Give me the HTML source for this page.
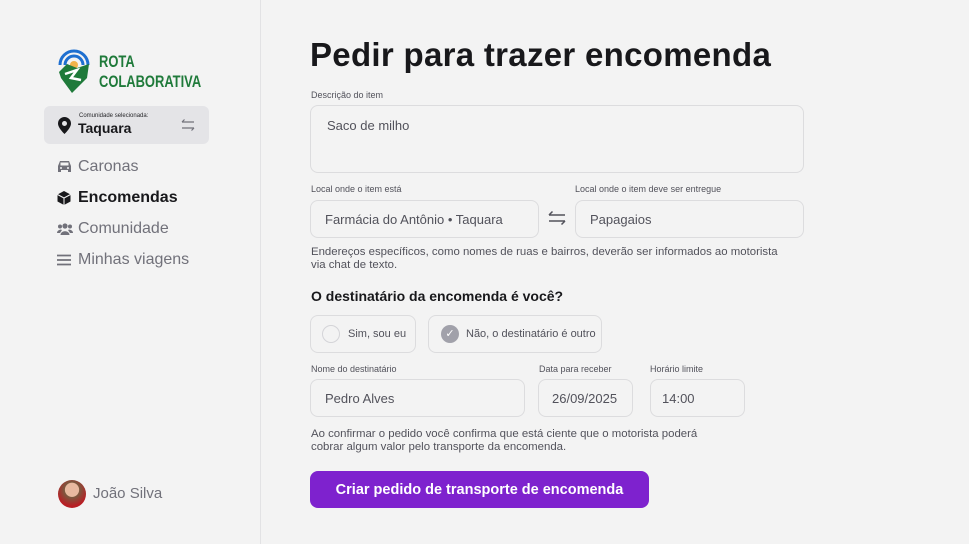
<!DOCTYPE html>
<html><head><meta charset="utf-8"><style>
*{box-sizing:border-box;margin:0;padding:0}
body{width:969px;height:544px;background:#f3f3f3;font-family:"Liberation Sans",sans-serif;position:relative;overflow:hidden;color:#18181b}
.side{position:absolute;left:0;top:0;width:261px;height:544px;border-right:1px solid #e2e2e4}
.a{position:absolute}
.lbl{position:absolute;font-size:9px;color:#52525b}
.inp{position:absolute;border:1px solid #dcdcde;border-radius:8px;font-size:13px;color:#52525b;padding-left:14px;display:flex;align-items:center}
.nav{position:absolute;left:58px;font-size:16px;color:#71717a}
.ic{position:absolute;left:57px}
.help{position:absolute;font-size:11.4px;color:#52525b;line-height:13px}
</style></head><body>
<div class="side">
<svg class="a" style="left:57px;top:48px" width="34" height="46" viewBox="0 0 34 46">
<path d="M3 17 A14 14 0 0 1 31 17" fill="none" stroke="#1e6fd0" stroke-width="3"/>
<path d="M8 17 A9 9 0 0 1 26 17" fill="none" stroke="#1e6fd0" stroke-width="3"/>
<circle cx="17" cy="17" r="4" fill="#f0b24a"/>
<path d="M2 24 L10 16 L20 20 L32 16 L30 30 L15 45 L4 30Z" fill="#1f7a3a"/>
<path d="M8 26 L20 22 L14 30 L24 32" fill="none" stroke="#fff" stroke-width="2.5"/>
</svg>
<div class="a" style="left:99px;top:52px;font-size:17px;font-weight:bold;color:#1f7a3a;line-height:20px;transform:scaleX(.76);transform-origin:left">ROTA<br>COLABORATIVA</div>
<div class="a" style="left:44px;top:106px;width:165px;height:38px;background:#e4e4e7;border-radius:6px"></div>
<svg class="a" style="left:57px;top:117px" width="15" height="17" viewBox="0 0 15 17"><path d="M7.5 0A6.5 6.5 0 0 0 1 6.5C1 11 7.5 17 7.5 17S14 11 14 6.5A6.5 6.5 0 0 0 7.5 0Z" fill="#18181b"/><circle cx="7.5" cy="6.5" r="2.5" fill="#e4e4e7"/></svg>
<div class="a" style="left:79px;top:113px;font-size:6px;color:#27272a">Comunidade selecionada:</div>
<div class="a" style="left:78px;top:120px;font-size:14px;font-weight:bold">Taquara</div>
<svg class="a" style="left:181px;top:118px" width="14" height="14" viewBox="0 0 14 14" fill="none" stroke="#71717a" stroke-width="1.2"><path d="M1 4H13M1 4L3.5 1.5M13 10H1M13 10L10.5 12.5"/></svg>
<svg class="ic" style="top:160px" width="15" height="13" viewBox="0 0 15 13"><path d="M3 1H12L14 6V12H11V10H4V12H1V6Z" fill="#71717a"/><rect x="3.5" y="2.5" width="8" height="3" fill="#f3f3f3"/><circle cx="4" cy="8" r="1" fill="#f3f3f3"/><circle cx="11" cy="8" r="1" fill="#f3f3f3"/></svg>
<div class="nav" style="left:78px;top:158px">Caronas</div>
<svg class="ic" style="top:191px" width="14" height="14" viewBox="0 0 14 14"><path d="M7 0L13.5 3.5V10.5L7 14L0.5 10.5V3.5Z" fill="#18181b"/><path d="M0.5 3.5L7 7L13.5 3.5M7 7V14" stroke="#f3f3f3" stroke-width="1" fill="none"/></svg>
<div class="nav" style="left:78px;top:189px;color:#18181b;font-weight:bold">Encomendas</div>
<svg class="ic" style="top:222px" width="16" height="13" viewBox="0 0 16 13" fill="#71717a"><circle cx="8" cy="4" r="2.6"/><circle cx="3" cy="4.5" r="2"/><circle cx="13" cy="4.5" r="2"/><path d="M3.5 13C3.5 8 12.5 8 12.5 13Z"/><path d="M0 11C0 8 4 7 5 8L3 11Z"/><path d="M16 11C16 8 12 7 11 8L13 11Z"/></svg>
<div class="nav" style="left:78px;top:220px">Comunidade</div>
<svg class="ic" style="top:254px" width="14" height="12" viewBox="0 0 14 12" stroke="#71717a" stroke-width="1.8"><path d="M0 1.5H14M0 6H14M0 10.5H14"/></svg>
<div class="nav" style="left:78px;top:251px">Minhas viagens</div>
<div class="a" style="left:58px;top:480px;width:28px;height:28px;border-radius:50%;background:radial-gradient(circle at 50% 35%,#e8b9a0 30%,#7a5a40 32%,#b81e24 70%)"></div>
<div class="a" style="left:93px;top:485px;font-size:15px;color:#71717a">João Silva</div>
</div>
<div class="a" style="left:310px;top:36px;font-size:33px;font-weight:bold;color:#18181b;letter-spacing:0.3px">Pedir para trazer encomenda</div>
<div class="lbl" style="left:311px;top:90px">Descrição do item</div>
<div class="inp" style="left:310px;top:105px;width:494px;height:68px;align-items:flex-start;padding-top:12px;padding-left:16px">Saco de milho</div>
<div class="lbl" style="left:311px;top:184px">Local onde o item está</div>
<div class="inp" style="left:310px;top:200px;width:229px;height:38px">Farmácia do Antônio • Taquara</div>
<svg class="a" style="left:548px;top:210px" width="18" height="16" viewBox="0 0 18 16" fill="none" stroke="#52525b" stroke-width="1.5"><path d="M1 5H17M1 5L4.5 1.5M17 11H1M17 11L13.5 14.5"/></svg>
<div class="lbl" style="left:575px;top:184px">Local onde o item deve ser entregue</div>
<div class="inp" style="left:575px;top:200px;width:229px;height:38px">Papagaios</div>
<div class="help" style="left:311px;top:246px">Endereços específicos, como nomes de ruas e bairros, deverão ser informados ao motorista<br>via chat de texto.</div>
<div class="a" style="left:311px;top:288px;font-size:14px;font-weight:bold">O destinatário da encomenda é você?</div>
<div class="inp" style="left:310px;top:315px;width:106px;height:38px;font-size:11px;padding-left:11px;gap:8px"><span style="width:18px;height:18px;border:1px solid #d4d4d8;border-radius:50%"></span>Sim, sou eu</div>
<div class="inp" style="left:428px;top:315px;width:174px;height:38px;font-size:11px;padding-left:12px;gap:7px"><span style="width:18px;height:18px;background:#a1a1aa;border-radius:50%;color:#fff;font-size:11px;text-align:center;line-height:18px">✓</span>Não, o destinatário é outro</div>
<div class="lbl" style="left:311px;top:364px">Nome do destinatário</div>
<div class="inp" style="left:310px;top:379px;width:215px;height:38px">Pedro Alves</div>
<div class="lbl" style="left:539px;top:364px">Data para receber</div>
<div class="inp" style="left:538px;top:379px;width:95px;height:38px;padding-left:13px">26/09/2025</div>
<div class="lbl" style="left:650px;top:364px">Horário limite</div>
<div class="inp" style="left:650px;top:379px;width:95px;height:38px;padding-left:11px">14:00</div>
<div class="help" style="left:311px;top:428px">Ao confirmar o pedido você confirma que está ciente que o motorista poderá<br>cobrar algum valor pelo transporte da encomenda.</div>
<div class="a" style="left:310px;top:471px;width:339px;height:37px;background:#7e22ce;border-radius:8px;color:#fff;font-size:14.5px;font-weight:bold;display:flex;align-items:center;justify-content:center">Criar pedido de transporte de encomenda</div>
</body></html>
